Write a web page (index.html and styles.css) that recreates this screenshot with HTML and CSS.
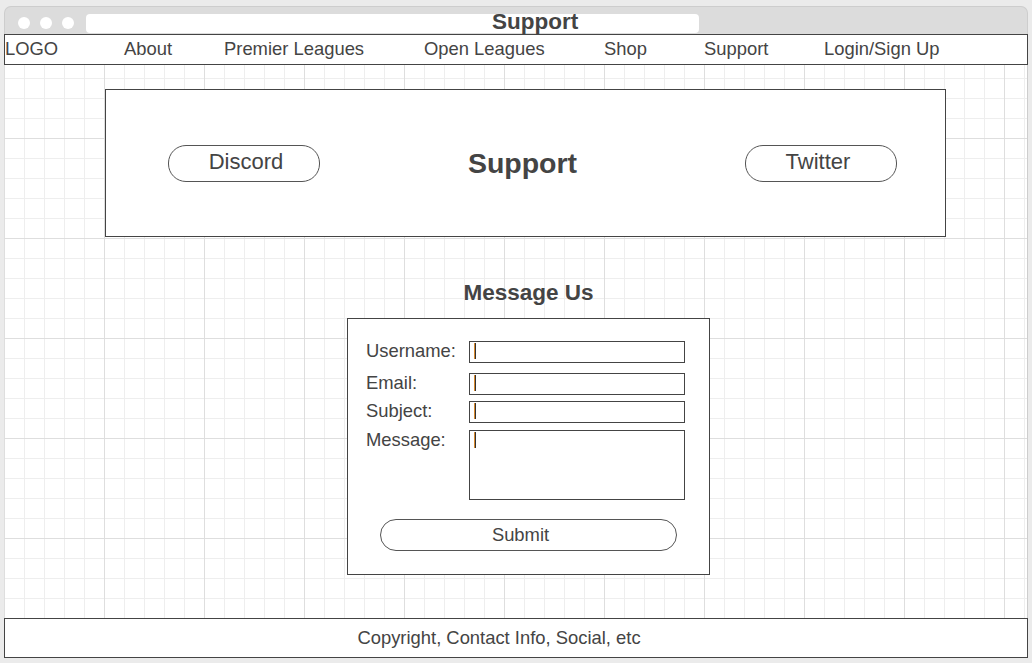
FILE: index.html
```html
<!DOCTYPE html>
<html lang="en">

<head>
    <meta charset="UTF-8">
    <meta name="viewport" content="width=device-width, initial-scale=1.0">
    <title>Support</title>
    <link rel="stylesheet" href="styles.css">
</head>

<body>
    <div class="window">
        <div class="titlebar">
            <span class="dot"></span>
            <span class="dot"></span>
            <span class="dot"></span>
            <div class="address"></div>
            <div class="window-title">Support</div>
        </div>

        <nav class="nav">
            <a class="nav-item nav-logo">LOGO</a>
            <a class="nav-item nav-about">About</a>
            <a class="nav-item nav-premier">Premier Leagues</a>
            <a class="nav-item nav-open">Open Leagues</a>
            <a class="nav-item nav-shop">Shop</a>
            <a class="nav-item nav-support">Support</a>
            <a class="nav-item">Login/Sign Up</a>
        </nav>

        <main class="canvas">
            <section class="hero">
                <a class="pill hero-btn">Discord</a>
                <h1 class="hero-title">Support</h1>
                <a class="pill hero-btn hero-btn-right">Twitter</a>
            </section>

            <div class="contact">
                <h2 class="contact-title">Message Us</h2>
                <form class="message-form">
                    <div class="form-row row-username">
                        <label>Username:</label>
                        <div class="field"><span class="caret"></span></div>
                    </div>
                    <div class="form-row row-email">
                        <label>Email:</label>
                        <div class="field"><span class="caret"></span></div>
                    </div>
                    <div class="form-row row-subject">
                        <label>Subject:</label>
                        <div class="field"><span class="caret"></span></div>
                    </div>
                    <div class="form-row row-message">
                        <label>Message:</label>
                        <div class="field field-area"><span class="caret"></span></div>
                    </div>
                    <button type="button" class="pill submit">Submit</button>
                </form>
            </div>
        </main>

        <footer class="footer">Copyright, Contact Info, Social, etc</footer>
    </div>
</body>

</html>
```

FILE: styles.css
```css
body {
    margin: 0;
    background-color: #ebebeb;
    font-family: 'Liberation Sans', Arial, sans-serif;
    color: #444;
}

.window {
    position: relative;
    display: flex;
    flex-direction: column;
    width: 1024px;
    height: 652px;
    margin: 6px 0 0 4px;
}

/* window chrome */
.titlebar {
    display: flex;
    align-items: center;
    height: 28px;
    box-sizing: border-box;
    padding: 5px 0 0 13px;
    background-color: #dcdcdc;
    border: 1px solid #cdcdcd;
    border-bottom: none;
    border-radius: 7px 7px 0 0;
}

.dot {
    width: 12px;
    height: 12px;
    margin-right: 10px;
    border-radius: 50%;
    background-color: #fff;
}

.address {
    width: 613px;
    height: 19px;
    margin-left: 2px;
    background-color: #fff;
    border-radius: 4px;
}

.window-title {
    position: absolute;
    top: 4px;
    left: 488px;
    font-size: 22.5px;
    font-weight: bold;
    line-height: 24px;
}

/* navigation */
.nav {
    display: flex;
    align-items: center;
    height: 31px;
    box-sizing: border-box;
    padding-bottom: 2px;
    background-color: #fff;
    border: 1px solid #444;
}

.nav-item {
    font-size: 18.4px;
    color: #444;
}

.nav-logo { width: 119px; }
.nav-about { width: 100px; }
.nav-premier { width: 200px; }
.nav-open { width: 180px; }
.nav-shop { width: 100px; }
.nav-support { width: 120px; }

/* grid canvas */
.canvas {
    flex: 1;
    border-right: 1px solid #cdcdcd;
    background-color: #fff;
    background-image:
        linear-gradient(#dedede 1px, transparent 1px),
        linear-gradient(90deg, #dedede 1px, transparent 1px),
        linear-gradient(#eeeeee 1px, transparent 1px),
        linear-gradient(90deg, #eeeeee 1px, transparent 1px);
    background-size: 100px 100px, 100px 100px, 20px 20px, 20px 20px;
    background-position: 0 73px, 0 0, 0 13px, 0 0;
    overflow: hidden;
}

.hero {
    display: flex;
    align-items: center;
    width: 841px;
    height: 148px;
    box-sizing: border-box;
    margin: 24px 0 0 101px;
    padding-left: 62px;
    background-color: #fff;
    border: 1px solid #444;
}

.pill {
    box-sizing: border-box;
    background-color: #fff;
    border: 1px solid #555;
    color: #444;
    font-family: inherit;
    text-align: center;
}

.hero-btn {
    width: 152px;
    height: 37px;
    border-radius: 18px;
    font-size: 22px;
    line-height: 31px;
    padding-left: 4px;
}

.hero-btn-right {
    margin-left: 20px;
    padding: 0 6px 0 0;
}

.hero-title {
    width: 405px;
    margin: 0;
    font-size: 28.5px;
    text-align: center;
}

/* message form */
.contact {
    width: 363px;
    margin: 43px 0 0 343px;
}

.contact-title {
    margin: 0 0 12px;
    font-size: 22.5px;
    line-height: 26px;
    text-align: center;
}

.message-form {
    display: flex;
    flex-direction: column;
    box-sizing: border-box;
    padding: 22px 24px 23px 18px;
    background-color: #fff;
    border: 1px solid #444;
}

.form-row {
    display: flex;
    align-items: flex-start;
}

.form-row label {
    width: 103px;
    font-size: 18.4px;
    line-height: 20px;
}

.row-email { margin-top: 10px; }
.row-subject { margin-top: 6px; }
.row-message { margin-top: 7px; }

.field {
    display: flex;
    width: 216px;
    height: 22px;
    box-sizing: border-box;
    background-color: #fff;
    border: 1px solid #444;
}

.field-area {
    height: 70px;
}

.caret {
    width: 2px;
    height: 16px;
    margin: 1px 0 0 4px;
    background: linear-gradient(to right, #d98a2e 50%, #333 50%);
}

.submit {
    width: 297px;
    height: 32px;
    margin: 19px 0 0 14px;
    padding: 0 16px 0 0;
    border-radius: 16px;
    font-size: 18.4px;
    line-height: 30px;
}

/* footer */
.footer {
    height: 40px;
    box-sizing: border-box;
    padding-right: 34px;
    background-color: #fff;
    border: 1px solid #444;
    font-size: 18.4px;
    line-height: 38px;
    text-align: center;
}
```
